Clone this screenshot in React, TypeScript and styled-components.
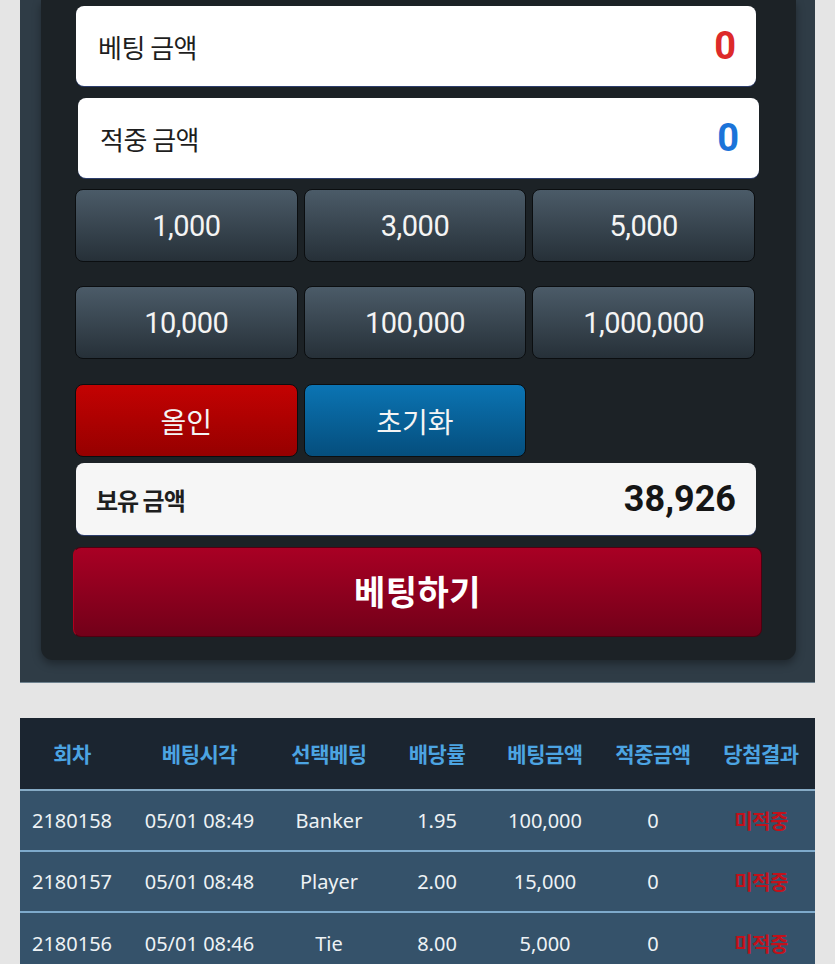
import React from "react";
import styled, { createGlobalStyle, css } from "styled-components";

const GlobalStyle = createGlobalStyle`
  html, body {
    margin: 0;
    padding: 0;
    background: #e5e5e5;
  }
  body {
    font-family: Roboto, "Noto Sans CJK KR", sans-serif;
  }
  * { box-sizing: border-box; }
`;

const Page = styled.div`
  width: 835px;
  padding: 0 20px;
`;

const OuterPanel = styled.section`
  background: #2f3c46;
  padding: 0 19px 22px 21px;
  border-bottom: 1px solid #6f828f;
`;

const InnerPanel = styled.div`
  background: #1c2226;
  border-radius: 0 0 12px 12px;
  padding: 6px 40px 23px 35px;
  box-shadow: 0 4px 8px rgba(0, 0, 0, 0.35);
  display: flex;
  flex-direction: column;
`;

const AmountBox = styled.div<{ $shift?: boolean; $soft?: boolean; $top?: number }>`
  height: ${(p) => (p.$soft ? 72 : 80)}px;
  margin-top: ${(p) => p.$top ?? 0}px;
  background: ${(p) => (p.$soft ? "#f6f6f6" : "#ffffff")};
  border-radius: 8px;
  box-shadow: 0 1px 0 #2c3d6b;
  display: flex;
  align-items: center;
  justify-content: space-between;
  padding: 0 20px 0 ${(p) => (p.$soft ? 20 : 22)}px;
  ${(p) =>
    p.$shift &&
    css`
      margin-left: 2px;
      margin-right: -3px;
    `}
`;

const BoxLabel = styled.span<{ $bold?: boolean }>`
  font-family: "Noto Sans CJK KR", sans-serif;
  font-size: ${(p) => (p.$bold ? 24 : 26)}px;
  font-weight: ${(p) => (p.$bold ? 700 : 400)};
  color: #1e1e1e;
  letter-spacing: ${(p) => (p.$bold ? "-1px" : "-0.5px")};
`;

const BoxValue = styled.span<{ $color: string; $size: number }>`
  font-family: Roboto, sans-serif;
  font-weight: 700;
  font-size: ${(p) => p.$size}px;
  color: ${(p) => p.$color};
`;

const ChipGrid = styled.div<{ $top: number }>`
  display: grid;
  grid-template-columns: repeat(3, 1fr);
  column-gap: 6px;
  margin: ${(p) => p.$top}px 0 0 -1px;
  width: 680px;
`;

const buttonTones = {
  slate: "linear-gradient(#4b5b68, #263038)",
  red: "linear-gradient(#c30202, #960000)",
  blue: "linear-gradient(#0b74b3, #054e7d)",
};

const ChipButton = styled.button<{ $tone: keyof typeof buttonTones }>`
  height: 73px;
  border: 1.5px solid #0b0e10;
  border-radius: 8px;
  background: ${(p) => buttonTones[p.$tone]};
  color: #f4f4f4;
  font-family: Roboto, "Noto Sans CJK KR", sans-serif;
  font-size: ${(p) => (p.$tone === "slate" ? 29 : 28)}px;
  font-weight: 400;
  letter-spacing: ${(p) => (p.$tone === "slate" ? "-0.5px" : "0")};
  padding: 0;
  display: flex;
  align-items: center;
  justify-content: center;
`;

const BetButton = styled.button`
  margin: 12px 0 0 -3px;
  width: 689px;
  height: 90px;
  border: 1px solid #4e0010;
  border-left-color: #b1001d;
  border-radius: 8px;
  background: linear-gradient(#a90024, #720019);
  color: #ffffff;
  font-family: "Noto Sans CJK KR", sans-serif;
  font-size: 34px;
  font-weight: 700;
  letter-spacing: 0.5px;
  padding: 0 0 4px;
`;

const HistoryTable = styled.table`
  margin-top: 35px;
  width: 795px;
  border-collapse: collapse;
  table-layout: fixed;
  font-family: "Noto Sans", "Noto Sans CJK KR", sans-serif;
`;

const Col = styled.col<{ $w: number }>`
  width: ${(p) => p.$w}px;
`;

const HeadCell = styled.th`
  height: 72px;
  background: #1b2530;
  color: #4ca4e2;
  font-family: "Noto Sans CJK KR", sans-serif;
  font-size: 21px;
  font-weight: 700;
  text-align: center;
  padding: 0 0 2px;
  border-bottom: 2px solid #86abc6;
  letter-spacing: -0.5px;
  white-space: nowrap;
`;

const Row = styled.tr`
  & + & td {
    border-top: 2px solid #7eaacb;
  }
`;

const Cell = styled.td<{ $miss?: boolean }>`
  height: 61px;
  background: #35526a;
  color: ${(p) => (p.$miss ? "#c2111b" : "#eef2f5")};
  font-family: ${(p) =>
    p.$miss ? `"Noto Sans CJK KR", sans-serif` : `"Noto Sans", "Noto Sans CJK KR", sans-serif`};
  font-weight: ${(p) => (p.$miss ? 700 : 400)};
  font-size: 20px;
  text-align: center;
  padding: 0;
  white-space: nowrap;
  letter-spacing: ${(p) => (p.$miss ? "-0.5px" : "0")};
`;

const columns = [
  { label: "회차", width: 104 },
  { label: "베팅시각", width: 151 },
  { label: "선택베팅", width: 108 },
  { label: "배당률", width: 108 },
  { label: "베팅금액", width: 108 },
  { label: "적중금액", width: 108 },
  { label: "당첨결과", width: 108 },
];

const rows = [
  ["2180158", "05/01 08:49", "Banker", "1.95", "100,000", "0", "미적중"],
  ["2180157", "05/01 08:48", "Player", "2.00", "15,000", "0", "미적중"],
  ["2180156", "05/01 08:46", "Tie", "8.00", "5,000", "0", "미적중"],
];

export default function App() {
  return (
    <>
      <GlobalStyle />
      <Page>
        <OuterPanel>
          <InnerPanel>
            <AmountBox>
              <BoxLabel>베팅 금액</BoxLabel>
              <BoxValue $color="#dd2a2a" $size={38}>0</BoxValue>
            </AmountBox>
            <AmountBox $shift $top={12}>
              <BoxLabel>적중 금액</BoxLabel>
              <BoxValue $color="#1b74d9" $size={38}>0</BoxValue>
            </AmountBox>
            <ChipGrid $top={11}>
              <ChipButton $tone="slate">1,000</ChipButton>
              <ChipButton $tone="slate">3,000</ChipButton>
              <ChipButton $tone="slate">5,000</ChipButton>
            </ChipGrid>
            <ChipGrid $top={24}>
              <ChipButton $tone="slate">10,000</ChipButton>
              <ChipButton $tone="slate">100,000</ChipButton>
              <ChipButton $tone="slate">1,000,000</ChipButton>
            </ChipGrid>
            <ChipGrid $top={25}>
              <ChipButton $tone="red">올인</ChipButton>
              <ChipButton $tone="blue">초기화</ChipButton>
            </ChipGrid>
            <AmountBox $soft $top={6}>
              <BoxLabel $bold>보유 금액</BoxLabel>
              <BoxValue $color="#151515" $size={36}>38,926</BoxValue>
            </AmountBox>
            <BetButton>베팅하기</BetButton>
          </InnerPanel>
        </OuterPanel>
        <HistoryTable>
          <colgroup>
            {columns.map((c) => (
              <Col key={c.label} $w={c.width} />
            ))}
          </colgroup>
          <thead>
            <tr>
              {columns.map((c) => (
                <HeadCell key={c.label}>{c.label}</HeadCell>
              ))}
            </tr>
          </thead>
          <tbody>
            {rows.map((r) => (
              <Row key={r[0]}>
                {r.map((v, i) => (
                  <Cell key={i} $miss={i === 6}>
                    {v}
                  </Cell>
                ))}
              </Row>
            ))}
          </tbody>
        </HistoryTable>
      </Page>
    </>
  );
}
